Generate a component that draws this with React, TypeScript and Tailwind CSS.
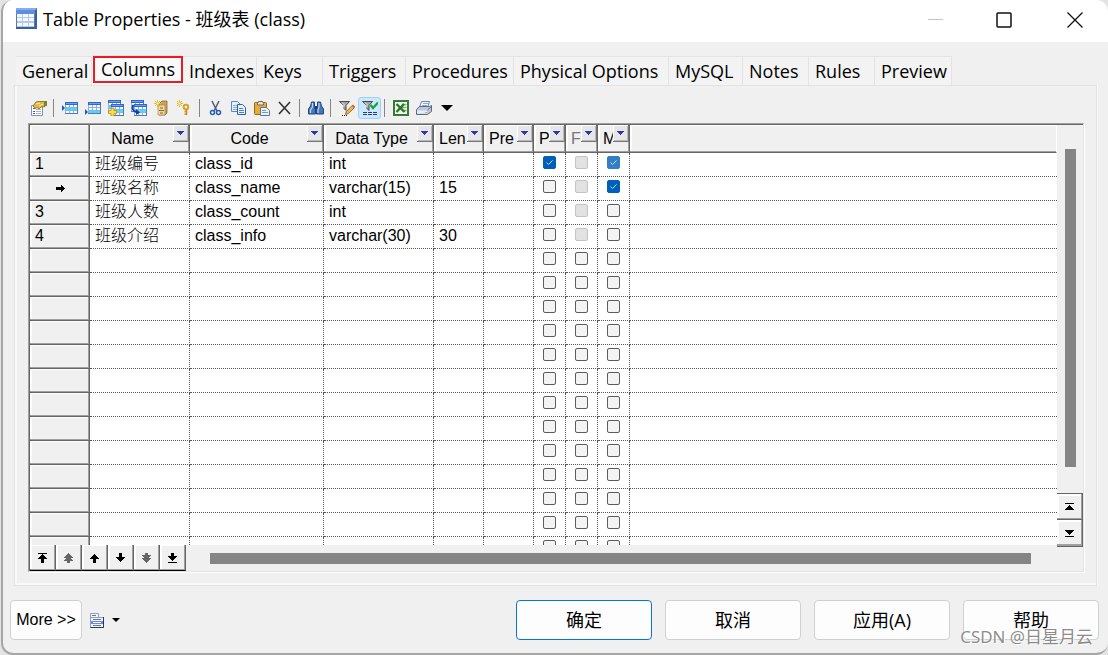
import React, { useState } from "react";

type Kids = { children?: React.ReactNode };

function Glyph({ children }: Kids) {
  return (
    <svg width="16" height="16" viewBox="0 0 16 16" fill="none" aria-hidden="true">
      {children}
    </svg>
  );
}

function MiniGrid({ x, y, band = 1 }: { x: number; y: number; band?: number }) {
  return (
    <g transform={`translate(${x} ${y})`} shapeRendering="crispEdges">
      <rect width="13" height="12" fill="#8db0e6" />
      <rect width="13" height="3" fill="#2f66cf" />
      <rect x="1" y="1" width="11" height="1" fill="#6f9ff0" />
      {[0, 1, 2].map((r) =>
        [0, 1, 2].map((c) => (
          <rect
            key={`${r}${c}`}
            x={1 + c * 4}
            y={3 + r * 3}
            width="3"
            height="2"
            fill={r === band ? "#3fe4f2" : "#f4f8ff"}
          />
        ))
      )}
      <path d="M12 3h1v9h-13v-1h12z" fill="#5378b4" />
    </g>
  );
}

function Spark({ x, y }: { x: number; y: number }) {
  return (
    <g transform={`translate(${x} ${y})`} stroke="#e9b92c">
      <path d="M3.5 0v7M0 3.5h7M1 1l5 5M6 1l-5 5" />
      <rect x="2.5" y="2.5" width="2" height="2" fill="#fff6a8" stroke="none" />
    </g>
  );
}

const PropsIcon = () => (
  <Glyph>
    <path d="M.5 5.500h11v10h-11z" fill="#fff" stroke="#7d93b5" />
    <path d="M2 8.500h2M2 11.500h2M2 13.500h2" stroke="#2f62b5" />
    <path d="M5 9.500h5M5 11.500h5M5 13.500h5" stroke="#a9b6ca" />
    <path d="M2 6l3-4 3-.5h6v5l-4 .5-2 2-2-1.500-2 1z" fill="#e3b640" stroke="#80601a" strokeWidth=".8" />
    <path d="M5 4l4-1M8 6l4-2" stroke="#fff0a0" />
    <path d="M13 1h3v5h-3z" fill="#7d8430" />
  </Glyph>
);

const InsertRowIcon = () => (
  <Glyph>
    <MiniGrid x={3} y={2} />
    <path d="M0 5l3 3-3 3z" fill="#1c55c8" />
  </Glyph>
);

const AddRowIcon = () => (
  <Glyph>
    <MiniGrid x={3} y={2} band={2} />
    <path d="M0 9l3 3-3 3z" fill="#1c55c8" />
  </Glyph>
);

const AddColumnsIcon = () => (
  <Glyph>
    <MiniGrid x={0} y={0} />
    <MiniGrid x={3} y={4} />
    <path d="M3 8h3v2.500h2.500v3h-2.500v2.500h-3v-2.500h-2.500v-3h2.500z" fill="#f8df45" stroke="#b98d18" strokeWidth=".8" />
  </Glyph>
);

const ReplicateIcon = () => (
  <Glyph>
    <MiniGrid x={0} y={0} />
    <MiniGrid x={3} y={4} />
    <path d="M2.500 5c-2 3-1 6 3 7" stroke="#173f9e" strokeWidth="1.800" />
    <path d="M5 9l4 3.500-4 2.500z" fill="#173f9e" />
  </Glyph>
);

const DomainIcon = () => (
  <Glyph>
    <path d="M5 4l3-3h5v12l-2 2h-6z" fill="#c9a45c" stroke="#8d6728" strokeWidth=".8" />
    <path d="M4 5h7v10h-7z" fill="#ecd7a4" stroke="#a17c3c" strokeWidth=".6" />
    <path d="M5 10.500h5M6 8h3M6 13h3" stroke="#8d6728" />
    <Spark x={0} y={0} />
  </Glyph>
);

const KeyIcon = () => (
  <Glyph>
    <circle cx="9" cy="7" r="2.300" stroke="#dca32a" strokeWidth="2" />
    <path d="M9.500 9v6M9.500 11.500h-2M9.500 14h-2" stroke="#c98f18" strokeWidth="1.600" />
    <Spark x={-1} y={0} />
  </Glyph>
);

const CutIcon = () => (
  <Glyph>
    <path d="M4 1l5 10M11 1l-5 10" stroke="#53617a" strokeWidth="1.600" />
    <circle cx="4.500" cy="12.500" r="2" stroke="#255cc1" strokeWidth="1.500" />
    <circle cx="10.500" cy="12.500" r="2" stroke="#255cc1" strokeWidth="1.500" />
  </Glyph>
);

const CopyIcon = () => (
  <Glyph>
    <path d="M.5 1.500h6l3 3v7h-9z" fill="#e8f1ff" stroke="#5c86c9" />
    <path d="M2 5.500h5M2 7.500h5M2 9.500h5" stroke="#83a7df" />
    <path d="M6.500 4.500h5l3 3v7h-8z" fill="#e8f1ff" stroke="#335fa9" />
    <path d="M8 8.500h4M8 10.500h5M8 12.500h5" stroke="#4f80cc" />
  </Glyph>
);

const PasteIcon = () => (
  <Glyph>
    <rect x=".5" y="2.500" width="12" height="12" rx="1" fill="#e6ac35" stroke="#94651a" />
    <path d="M3.500 3.500l1-2h4l1 2v1.500h-6z" fill="#e6e4da" stroke="#6d685d" />
    <path d="M6.500 7.500h6l3 3v5h-9z" fill="#eaf1fb" stroke="#61779a" />
    <path d="M8 10.500h4M8 12.500h6" stroke="#7796c7" />
  </Glyph>
);

const DeleteIcon = () => (
  <Glyph>
    <path d="M2 2l11 12M13 2l-11 12" stroke="#303030" strokeWidth="1.600" />
  </Glyph>
);

const FindIcon = () => (
  <Glyph>
    <path d="M3.500 2h3v4l1 2v6h-7v-5l2-3zM9.500 2h3l1 4 2 3v5h-7v-6l1-2z" fill="#4677bd" stroke="#23477f" />
    <path d="M6.500 6h3v3h-3z" fill="#1d3b70" />
    <path d="M4.500 3v4l-2 3v3M11 3v4l-1 3v3" stroke="#b9d6fa" strokeWidth="1.200" />
  </Glyph>
);

const Funnel = () => (
  <>
    <path d="M.5 1.500h10l-3.500 4v5l-2-2v-3z" fill="#a5a5a5" stroke="#4a4a4a" />
    <path d="M3 2.500l2 2v3" stroke="#f4f4f4" />
  </>
);

const EditFilterIcon = () => (
  <Glyph>
    <Funnel />
    <path d="M7 12l6-6.500 2.500 2-6 6-3 1z" fill="#edb650" stroke="#865525" strokeWidth=".8" />
    <path d="M13 5.500l1-1 2 2-1 1.500z" fill="#d45448" />
    <path d="M3 15.500h1M5 15.500h1M7 15.500h1" stroke="#222" />
  </Glyph>
);

const ApplyFilterIcon = () => (
  <Glyph>
    <Funnel />
    <path d="M8.500 5l2.500 3 5-5.500" stroke="#12a637" strokeWidth="2.200" />
    <path d="M1 12.500h4M6 12.500h4M11 12.500h4M1 14.500h4M6 14.500h4M11 14.500h4" stroke="#263d83" />
  </Glyph>
);

const ExcelIcon = () => (
  <Glyph>
    <rect x="1" y="1" width="14" height="14" fill="#f1faee" stroke="#377a37" strokeWidth="2" />
    <path d="M9 4.500h4.500M9 7.500h4.500M9 10.500h4.500" stroke="#7db276" strokeWidth="1.600" />
    <path d="M3.500 4l8 8M11 4l-7.500 8" stroke="#2a762d" strokeWidth="2.400" />
  </Glyph>
);

const PrintIcon = () => (
  <Glyph>
    <path d="M5.500 1.500h8l-2 6h-8z" fill="#f3f7fe" stroke="#6e83a8" />
    <path d="M7 3.500h5M6 5.500h5" stroke="#88a7da" />
    <path d="M.5 9.500l3-3h10l2-1v6l-4 3h-11z" fill="#bdc8dc" stroke="#5b6a86" />
    <path d="M1 10.500h10v3h-10z" fill="#e7edf6" />
    <path d="M11.500 10l4-3.500" stroke="#5b6a86" />
    <path d="M9 12h2v1h-2z" fill="#e3a73b" />
  </Glyph>
);

const CaretIcon = () => (
  <svg width="12" height="6" viewBox="0 0 12 6" aria-hidden="true">
    <path d="M0 0h12l-6 6z" fill="#000" />
  </svg>
);

const toolGroups: { name: string; Icon: () => React.ReactElement; on?: boolean }[][] = [
  [{ name: "Properties", Icon: PropsIcon }],
  [
    { name: "Insert a Row", Icon: InsertRowIcon },
    { name: "Add a Row", Icon: AddRowIcon },
    { name: "Add Columns", Icon: AddColumnsIcon },
    { name: "Replicate Columns", Icon: ReplicateIcon },
    { name: "Create Domain", Icon: DomainIcon },
    { name: "Create Key", Icon: KeyIcon },
  ],
  [
    { name: "Cut", Icon: CutIcon },
    { name: "Copy", Icon: CopyIcon },
    { name: "Paste", Icon: PasteIcon },
    { name: "Delete", Icon: DeleteIcon },
  ],
  [{ name: "Find", Icon: FindIcon }],
  [
    { name: "Customize Filter", Icon: EditFilterIcon },
    { name: "Enable Filter", Icon: ApplyFilterIcon, on: true },
  ],
  [
    { name: "Export to Excel", Icon: ExcelIcon },
    { name: "Print", Icon: PrintIcon },
    { name: "Print options", Icon: CaretIcon },
  ],
];

const tabs = [
  { name: "General", width: "w-[76px]" },
  { name: "Columns", width: "w-[91px]" },
  { name: "Indexes", width: "w-[74px]" },
  { name: "Keys", width: "w-[66px]" },
  { name: "Triggers", width: "w-[83px]" },
  { name: "Procedures", width: "w-[108px]" },
  { name: "Physical Options", width: "w-[155px]" },
  { name: "MySQL", width: "w-[74px]" },
  { name: "Notes", width: "w-[66px]" },
  { name: "Rules", width: "w-[66px]" },
  { name: "Preview", width: "w-[77px]" },
];

type Tick = "on" | "off" | "lockedOn" | "lockedOff";
type Row = { name: string; code: string; type: string; len: string; ticks: Tick[] };

const blank: Row = { name: "", code: "", type: "", len: "", ticks: ["off", "off", "off"] };
const rows: Row[] = [
  { name: "班级编号", code: "class_id", type: "int", len: "", ticks: ["on", "lockedOff", "lockedOn"] },
  { name: "班级名称", code: "class_name", type: "varchar(15)", len: "15", ticks: ["off", "lockedOff", "on"] },
  { name: "班级人数", code: "class_count", type: "int", len: "", ticks: ["off", "lockedOff", "off"] },
  { name: "班级介绍", code: "class_info", type: "varchar(30)", len: "30", ticks: ["off", "lockedOff", "off"] },
  ...Array.from({ length: 13 }, () => blank),
];
const currentRow = 1;

const headers = [
  { text: "Name", wide: true },
  { text: "Code", wide: true },
  { text: "Data Type", wide: true },
  { text: "Len" },
  { text: "Pre" },
  { text: "P" },
  { text: "F", dim: true },
  { text: "M" },
];

const raised = "border-r border-b border-[#666] shadow-[inset_-1px_-1px_#a0a0a0,inset_2px_1px_#fff]";
const cell = "h-6 overflow-hidden border-r border-b border-dotted border-[#555] pl-[5px] align-top leading-[22px] whitespace-nowrap";

function TickBox({ state, label }: { state: Tick; label: string }) {
  const [checked, setChecked] = useState(state === "on" || state === "lockedOn");
  return (
    <span className="grid h-[19px] place-items-center">
      <input
        type="checkbox"
        aria-label={label}
        checked={checked}
        disabled={state.startsWith("locked")}
        onChange={(e) => setChecked(e.target.checked)}
        className="col-start-1 row-start-1 size-[13px] appearance-none rounded-[2px] border border-[#5c5c5c] bg-[#f3f3f3] checked:border-[#005fb8] checked:bg-[#005fb8] disabled:border-[#c4c4c4] disabled:bg-[#e2e2e2] disabled:checked:border-[#327fc6] disabled:checked:bg-[#327fc6]"
      />
      {checked && (
        <svg className="pointer-events-none col-start-1 row-start-1" width="7" height="5" viewBox="0 0 7 5" fill="none" aria-hidden="true">
          <path d="M.5 2.500l2 2 4-4" stroke="#d9ecff" strokeWidth=".9" />
        </svg>
      )}
    </span>
  );
}

const upArrow = "M5 1h1v1h1v1h1v1h1v1h1v1h-3v4h-3v-4h-3v-1h1v-1h1v-1h1v-1h1z";
const downArrow = "M4 0h3v4h3v1h-1v1h-1v1h-1v1h-1v1h-1v-1h-1v-1h-1v-1h-1v-1h-1v-1h3z";

const navButtons = [
  { name: "Move to top", d: "M1 0h9v1h-9zM5 1h1v1h1v1h1v1h1v1h1v1h-3v4h-3v-4h-3v-1h1v-1h1v-1h1v-1h1z", dim: false },
  { name: "Move up one page", d: "M5 0h1v1h1v1h1v1h1v1h1v1h-2v1h1v1h1v1h-3v2h-3v-2h-3v-1h1v-1h1v-1h-2v-1h1v-1h1v-1h1v-1h1z", dim: true },
  { name: "Move up one line", d: upArrow, dim: false },
  { name: "Move down one line", d: downArrow, dim: false },
  { name: "Move down one page", d: "M4 0h3v2h3v1h-1v1h-1v1h2v1h-1v1h-1v1h-1v1h-1v1h-1v-1h-1v-1h-1v-1h-1v-1h-1v-1h2v-1h-1v-1h-1v-1h3z", dim: true },
  { name: "Move to bottom", d: "M4 0h3v3h3v1h-1v1h-1v1h-1v1h-1v1h-1v-1h-1v-1h-1v-1h-1v-1h-1v-1h3zM1 9h9v1h-9z", dim: false },
];

function TitleBar() {
  return (
    <header className="flex h-[42px] shrink-0 items-start bg-white pt-2 pl-3">
      <svg width="22" height="21" viewBox="0 0 22 21" shapeRendering="crispEdges" aria-hidden="true">
        <rect x="1" y="0" width="21" height="21" fill="#577ab8" />
        <rect x="1" y="0" width="20" height="6" fill="#5c8fe0" />
        <rect x="1" y="0" width="20" height="2" fill="#86adeb" />
        <rect x="2" y="6" width="17" height="13" fill="#b5c9ea" />
        {[6, 10, 15].map((y) =>
          [2, 8, 14].map((x) => <rect key={`${x}-${y}`} x={x} y={y} width="5" height="3" fill="#f5f8fd" />)
        )}
        <rect x="20" y="2" width="2" height="19" fill="#405e96" />
        <rect x="1" y="19" width="21" height="2" fill="#405e96" />
      </svg>
      <h1 className="ml-[6px] text-[18px] leading-[23px]">Table Properties - 班级表 (class)</h1>
      <div className="ml-auto flex">
        <button aria-label="Minimize" disabled className="grid h-6 w-[62px] place-items-center">
          <svg width="15" height="16" viewBox="0 0 15 16"><path d="M0 7.500h15" stroke="#c4c4c4" /></svg>
        </button>
        <button aria-label="Maximize" className="grid h-6 w-[76px] place-items-center">
          <svg width="16" height="16" viewBox="0 0 16 16" fill="none"><rect x="1" y="1" width="14" height="14" rx="1" stroke="#111" strokeWidth="1.500" /></svg>
        </button>
        <button aria-label="Close" className="grid h-6 w-[66px] place-items-center">
          <svg width="16" height="16" viewBox="0 0 16 16"><path d="M.5.5l15 15M15.500.5l-15 15" stroke="#111" strokeWidth="1.300" /></svg>
        </button>
      </div>
    </header>
  );
}

function TabStrip() {
  return (
    <div role="tablist" className="flex items-end pl-[2px] text-[18px]">
      {tabs.map(({ name, width }) =>
        name === "Columns" ? (
          <button key={name} role="tab" aria-selected="true" className={`${width} h-[31px] shrink-0 border-t border-[#e3e3e3] bg-[#f9f9f9] pb-[3px] pl-px`}>
            <span className="block border-2 border-[#e81c24] text-center leading-[23px]">{name}</span>
          </button>
        ) : (
          <button key={name} role="tab" aria-selected="false" className={`${width} h-[30px] shrink-0 border-t border-r border-[#e3e3e3] bg-[#f3f3f3] pl-[6px] text-left leading-[29px] whitespace-nowrap`}>
            {name}
          </button>
        )
      )}
    </div>
  );
}

function Toolbar() {
  return (
    <div role="toolbar" className="flex h-[22px] shrink-0 pl-3">
      {toolGroups.map((group, g) => (
        <div key={g} className="flex">
          {g > 0 && (
            <div className="w-2 py-[2px] pl-[3px]">
              <div className="h-[18px] w-px bg-[#868686]" />
            </div>
          )}
          {group.map(({ name, Icon, on }) => (
            <button
              key={name}
              aria-label={name}
              className={`grid w-[23px] place-items-center ${on ? "rounded-[3px] border border-[#99d1ff] bg-[#cce8ff]" : ""}`}
            >
              <Icon />
            </button>
          ))}
        </div>
      ))}
    </div>
  );
}

function ColumnTable() {
  return (
    <table className="w-full table-fixed border-separate border-spacing-0 bg-white text-left text-[16px] [font-family:'Liberation_Sans','Noto_Sans_CJK_SC',sans-serif]">
      <colgroup>
        <col className="w-[60px]" />
        <col className="w-[100px]" />
        <col className="w-[134px]" />
        <col className="w-[110px]" />
        <col className="w-[50px]" />
        <col className="w-[50px]" />
        <col className="w-8" />
        <col className="w-8" />
        <col className="w-8" />
        <col />
      </colgroup>
      <thead>
        <tr className="bg-[#f0f0f0]">
          <th className={`h-7 ${raised}`} />
          {headers.map(({ text, wide, dim }) => (
            <th key={text} className={`p-0 font-normal ${raised}`}>
              <div className="flex h-[27px] overflow-hidden">
                <span className={`min-w-0 flex-1 overflow-hidden leading-[27px] whitespace-nowrap ${wide ? "pl-[2px] text-center" : "pl-[5px]"} ${dim ? "text-[#777]" : ""}`}>
                  {text}
                </span>
                <button aria-label={`Filter ${text}`} className="grid h-[17px] w-4 shrink-0 place-items-center border-r border-b border-[#777] bg-[#e6e6ea] shadow-[inset_1px_1px_#fff,inset_-1px_-1px_#b8b8b8]">
                  <svg width="7" height="4" viewBox="0 0 7 4" shapeRendering="crispEdges"><path d="M0 0h7v1h-1v1h-1v1h-1v1h-1v-1h-1v-1h-1v-1h-1z" fill="#3535a0" /></svg>
                </button>
              </div>
            </th>
          ))}
          <th className="border-r border-b border-r-white border-b-[#666] shadow-[inset_0_-1px_#a0a0a0,inset_2px_1px_#fff]" />
        </tr>
      </thead>
      <tbody>
        {rows.map((row, i) => (
          <tr key={i}>
            <th scope="row" className={`h-6 bg-[#f0f0f0] py-0 pr-0 pl-[5px] align-top leading-[22px] font-normal ${raised}`}>
              {i === currentRow ? (
                <svg className="mt-[8px] ml-[21px]" width="9" height="7" viewBox="0 0 9 7" shapeRendering="crispEdges"><path d="M0 2h5v-2h1v1h1v1h1v1h1v1h-1v1h-1v1h-1v1h-1v-2h-5z" /></svg>
              ) : row.name ? (
                i + 1
              ) : null}
            </th>
            <td className={`${cell} font-light`}>{row.name}</td>
            <td className={cell}>{row.code}</td>
            <td className={cell}>{row.type}</td>
            <td className={cell}>{row.len}</td>
            <td className={cell} />
            {row.ticks.map((t, k) => (
              <td key={k} className="h-6 border-r border-b border-dotted border-[#555] p-0 align-top">
                <TickBox state={t} label={`${"PFM"[k]} row ${i + 1}`} />
              </td>
            ))}
            <td className="border-b border-dotted border-[#555]" />
          </tr>
        ))}
      </tbody>
    </table>
  );
}

function ColumnGrid() {
  return (
    <div className="mt-1 mr-3 mb-[13px] ml-[13px] flex min-h-0 flex-1 border border-t-[#a0a0a0] border-r-[#e3e3e3] border-b-[#e3e3e3] border-l-[#a0a0a0] shadow-[1px_1px_#fff]">
      <div className="grid min-w-0 flex-1 grid-cols-[minmax(0,1fr)_26px] grid-rows-[minmax(0,1fr)_26px] border-t border-l border-[#666]">
        <div className="min-h-0 overflow-hidden">
          <ColumnTable />
        </div>
        <div className="-mb-[2px] flex flex-col">
          <div className="flex flex-1 justify-center pt-6 pb-[26px]">
            <div className="w-[11px] bg-[#858585]" />
          </div>
          <button aria-label="Previous page" className="grid h-[27px] shrink-0 place-items-center border-t border-r border-b border-[#666] shadow-[inset_-1px_-1px_#a0a0a0,inset_2px_2px_#fff]">
            <svg width="9" height="7" viewBox="0 0 9 7" shapeRendering="crispEdges"><path d="M0 0h9v1h-9zM4 2h1v1h1v1h1v1h1v1h1v1h-9v-1h1v-1h1v-1h1v-1h1z" /></svg>
          </button>
          <button aria-label="Next page" className="grid h-[27px] shrink-0 place-items-center border-r border-b border-[#666] shadow-[inset_-1px_-2px_#a0a0a0,inset_2px_2px_#fff]">
            <svg width="9" height="7" viewBox="0 0 9 7" shapeRendering="crispEdges"><path d="M0 6h9v1h-9zM0 0h9v1h-1v1h-1v1h-1v1h-1v1h-1v-1h-1v-1h-1v-1h-1v-1h-1z" /></svg>
          </button>
        </div>
        <div className="flex min-w-0 items-center">
          {navButtons.map(({ name, d, dim }) => (
            <button key={name} aria-label={name} className="grid h-full w-[26px] shrink-0 place-items-center border-r border-b border-r-[#666] border-b-black shadow-[inset_-1px_-1px_#a0a0a0,inset_2px_1px_#fff]">
              <svg width="11" height="10" viewBox="0 0 11 10" shapeRendering="crispEdges"><path d={d} className={dim ? "fill-[#666]" : "fill-black"} /></svg>
            </button>
          ))}
          <div className="ml-6 mr-[26px] h-[11px] flex-1 bg-[#858585]" />
        </div>
      </div>
    </div>
  );
}

function Footer() {
  const action = "h-10 w-[136px] rounded border bg-[#fdfdfd] text-[18px]";
  return (
    <footer className="relative flex shrink-0 items-center pt-[14px] pr-[9px] pb-[13px] pl-[7px]">
      <button className="h-10 w-[72px] rounded border border-[#d0d0d0] bg-[#fdfdfd] text-[16px] whitespace-nowrap [font-family:'Liberation_Sans',sans-serif]">More &gt;&gt;</button>
      <button aria-label="Property sheet menu" className="ml-2 flex items-center gap-2">
        <svg width="14" height="15" viewBox="0 0 14 15" fill="none">
          <path d="M.5.500h8v4h5v10h-13z" fill="#f2f4f8" stroke="#8fa0bd" />
          <path d="M13.500 4v10.500h-13" stroke="#25375c" />
          <path d="M1 4.500h12" stroke="#8fa0bd" />
          <path d="M2 2.500h4M3 6.500h8M3 12.500h8" stroke="#70747c" />
          <path d="M1 8h12v3h-12z" fill="#6a86f2" />
          <path d="M3 9.500h8" stroke="#fff" />
        </svg>
        <svg width="8" height="4" viewBox="0 0 8 4"><path d="M0 0h8l-4 4z" /></svg>
      </button>
      <div className="ml-auto flex gap-[13px]">
        <button className={`${action} border-[#0078d4]`}>确定</button>
        <button className={`${action} border-[#d0d0d0]`}>取消</button>
        <button className={`${action} border-[#d0d0d0]`}>应用(A)</button>
        <button className={`${action} border-[#d0d0d0]`}>帮助</button>
      </div>
      <span className="pointer-events-none absolute right-[15px] bottom-1 text-[17px] leading-6 text-[#8c8c8c] [text-shadow:1px_1px_#fff]">CSDN @日星月云</span>
    </footer>
  );
}

export default function App() {
  return (
    <div className="h-screen bg-[#e4e4e4] pl-px text-black [font-family:'Open_Sans','Noto_Sans_CJK_SC',sans-serif]">
      <div className="flex h-full flex-col overflow-hidden rounded-xl border-b-2 border-l-2 border-[#a6a6a6] bg-[#f0f0f0]">
        <TitleBar />
        <main className="flex min-h-0 flex-1 flex-col pt-[13px] pr-[11px] pl-[11px]">
          <TabStrip />
          <section className="-mt-px flex min-h-0 flex-1 flex-col border border-[#e3e3e3] pt-[11px] shadow-[inset_2px_-2px_#f9f9f9,1px_0_#f9f9f9]">
            <Toolbar />
            <ColumnGrid />
          </section>
        </main>
        <Footer />
      </div>
    </div>
  );
}
